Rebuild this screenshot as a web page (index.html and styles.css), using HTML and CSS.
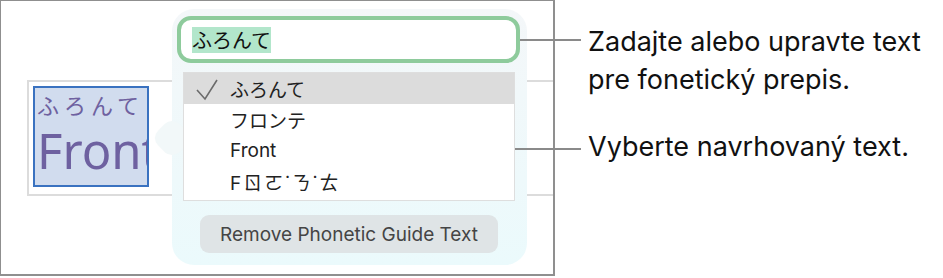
FILE: index.html
```html
<!DOCTYPE html>
<html lang="sk">
<head>
    <meta charset="UTF-8">
    <title>Phonetic guide</title>
    <link rel="stylesheet" href="styles.css">
</head>
<body>

<div class="page">
    <div class="frame">
        <div class="cell"><!--vybraný text v dokumente-->
            <div class="sel">
                <div class="ruby">ふろんて</div>
                <div class="base">Front</div>
            </div>
        </div>

        <div class="pop"><!--okno s fonetickým prepisom-->
            <div class="field"><span class="mark">ふろんて</span></div>
            <ul class="list">
                <li class="on">
                    <svg class="check" width="22" height="22" viewBox="0 0 22 22">
                        <polyline points="1,11 9,20 21,1" fill="none" stroke="#6b6b6b" stroke-width="1.6"/>
                    </svg>
                    ふろんて
                </li>
                <li>フロンテ</li>
                <li>Front</li>
                <li class="bpmf">Fㄖㄛ˙ㄋ˙ㄊ</li>
            </ul>
            <div class="btn">Remove Phonetic Guide Text</div>
        </div>
    </div>

    <div class="notes">
        <p class="note note-field">Zadajte alebo upravte text<br>pre fonetický prepis.</p>
        <p class="note note-list">Vyberte navrhovaný text.</p>
    </div>
</div>

</body>
</html>
```

FILE: styles.css
```css
body{
    margin: 0;
    background: #fff;
}
.page{
    display: flex;
    align-items: flex-start;
}

.frame{
    box-sizing: border-box;
    width: 555px;
    height: 276px;
    border: 1px solid #8f8f8f;
    border-right-width: 2px;
    border-bottom-width: 2px;
    position: relative;
    overflow: hidden;
    flex: none;
}
.cell{
    box-sizing: border-box;
    width: 620px;
    height: 116px;
    margin: 79px 0 0 26px;
    border: 2px solid #dcdcdc;
    padding: 4px;
}
.sel{
    box-sizing: border-box;
    width: 116px;
    height: 101px;
    border: 2px solid #3a72c0;
    background: #d1dcee;
    overflow: hidden;
    padding-left: 2px;
    color: #6e61a0;
    white-space: nowrap;
}
.ruby{
    font: 22px/26px "Noto Sans CJK JP", sans-serif;
    letter-spacing: 5px;
    margin-top: 3px;
}
.base{
    font: 49px/56px "Noto Sans", sans-serif;
    margin-top: 5px;
}

.pop{
    position: absolute;
    left: 171px;
    top: 8px;
    box-sizing: border-box;
    width: 355px;
    height: 256px;
    padding: 7px 7px 0 5px;
    border-radius: 22px;
    background: linear-gradient(#f4f7f9, #ebfafc);
}
.pop::before{
    content: '';
    position: absolute;
    left: -15px;
    top: 114px;
    width: 30px;
    height: 30px;
    border-radius: 10px;
    background: #f2f8f9;
    transform: rotate(45deg);
}
.field{
    position: relative;
    box-sizing: border-box;
    height: 47px;
    border: 4px solid #8ecb9c;
    border-radius: 14px;
    background: #fff;
    padding: 0 11px;
    display: flex;
    align-items: center;
}
.mark{
    background: #b2e6cb;
    font: 20px/26px "Noto Sans CJK JP", sans-serif;
    color: #111;
}

ul{
    margin: 0;
    padding: 0;
    list-style: none;
}
.list{
    position: relative;
    margin: 9px 5px 0 6px;
    padding-bottom: 3px;
    border: 1px solid #dedede;
    background: #fff;
}
.list li{
    height: 31px;
    display: flex;
    align-items: center;
    padding-left: 46px;
    font: 19px Inter, "Noto Sans CJK JP", sans-serif;
    color: #222;
    position: relative;
}
.list li.on{
    background: #dcdcdc;
}
.list .bpmf{
    font-family: Inter, "Noto Sans CJK TC", sans-serif;
    letter-spacing: 2px;
}
.check{
    position: absolute;
    left: 12px;
    top: 6px;
}

.btn{
    position: relative;
    height: 38px;
    margin: 14px 22px 0 23px;
    border-radius: 9px;
    background: #dfe4e6;
    color: #454545;
    font: 19px Inter, sans-serif;
    display: flex;
    align-items: center;
    justify-content: center;
}

.notes{
    margin-left: 33px;
    display: flex;
    flex-direction: column;
}
.note{
    position: relative;
    margin: 0;
    font: 27px/38px Inter, sans-serif;
    color: #111;
    white-space: nowrap;
}
.note::before{
    content: '';
    position: absolute;
    height: 2px;
    background: #8a8a8a;
}
.note-field{
    margin-top: 23px;
}
.note-field::before{
    top: 16px;
    left: -68px;
    width: 61px;
}
.note-list{
    margin-top: 29px;
}
.note-list::before{
    top: 20px;
    left: -73px;
    width: 66px;
}
```
